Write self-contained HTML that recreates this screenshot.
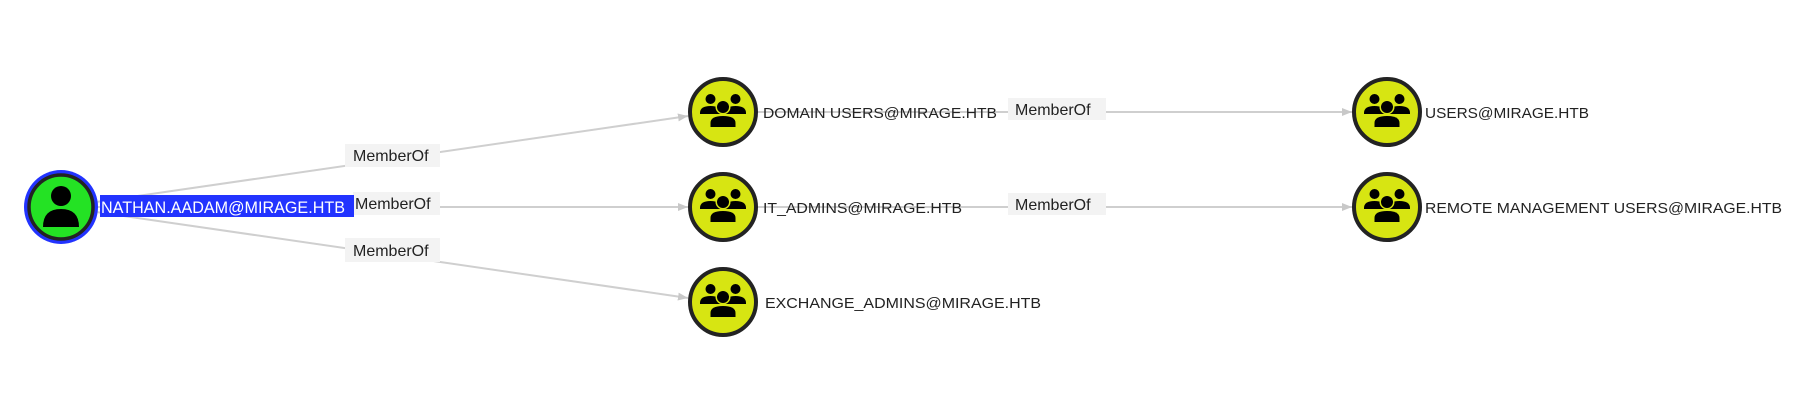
<!DOCTYPE html>
<html><head><meta charset="utf-8"><style>
html,body{margin:0;padding:0;background:#fff;width:1804px;height:412px;overflow:hidden}
svg{display:block}
text{font-family:"Liberation Sans",sans-serif}
</style></head><body>
<svg width="1804" height="412" viewBox="0 0 1804 412">
<defs>
<g id="grp">
  <circle r="33" fill="#d7e512" stroke="#232323" stroke-width="4"/>
  <circle cx="-12.5" cy="-13" r="5" fill="#000"/>
  <circle cx="12.5" cy="-13" r="5" fill="#000"/>
  <path d="M-23 2 v-1 q0-7 10.5-7 q10.5 0 10.5 7 v1 z" fill="#000"/>
  <path d="M2 2 v-1 q0-7 10.5-7 q10.5 0 10.5 7 v1 z" fill="#000"/>
  <circle cx="0" cy="-5" r="7.5" fill="#d7e512"/>
  <circle cx="0" cy="-5" r="6" fill="#000"/>
  <path d="M-14.5 17 v-6 q0-9 14.5-9 q14.5 0 14.5 9 v6 z" fill="#d7e512"/>
  <path d="M-12.5 15 v-4 q0-7 12.5-7 q12.5 0 12.5 7 v4 z" fill="#000"/>
</g>
<marker id="arr" markerWidth="10" markerHeight="8" refX="10" refY="4" orient="auto" markerUnits="userSpaceOnUse">
  <path d="M0 0 L10 4 L0 8 z" fill="#c8c8c8"/>
</marker>
</defs>
<g stroke="#cfcfcf" stroke-width="2" fill="none">
  <line x1="62" y1="207" x2="688" y2="116" marker-end="url(#arr)"/>
  <line x1="62" y1="207" x2="688" y2="207" marker-end="url(#arr)"/>
  <line x1="62" y1="207" x2="688" y2="298" marker-end="url(#arr)"/>
  <line x1="757" y1="112" x2="1352" y2="112" marker-end="url(#arr)"/>
  <line x1="757" y1="207" x2="1352" y2="207" marker-end="url(#arr)"/>
</g>
<g fill="#f3f3f3">
  <rect x="345" y="144" width="95" height="23"/>
  <rect x="353" y="192" width="87" height="23"/>
  <rect x="345" y="238" width="95" height="24"/>
  <rect x="1008" y="98" width="98" height="22"/>
  <rect x="1008" y="193" width="98" height="22"/>
</g>
<g fill="#222" font-size="16">
  <text x="353" y="161">MemberOf</text>
  <text x="355" y="209">MemberOf</text>
  <text x="353" y="256">MemberOf</text>
  <text x="1015" y="115">MemberOf</text>
  <text x="1015" y="210">MemberOf</text>
</g>
<circle cx="61" cy="207" r="37" fill="#2233ff"/>
<circle cx="61" cy="207" r="32" fill="#24e224" stroke="#232323" stroke-width="3.5"/>
<circle cx="61" cy="196" r="10" fill="#000"/>
<path d="M43 227 q0-18 18-18 q18 0 18 18 z" fill="#000"/>
<rect x="100" y="195" width="254" height="22" fill="#2233ff"/>
<text x="101" y="213" fill="#fff" font-size="17" textLength="244" lengthAdjust="spacingAndGlyphs">NATHAN.AADAM@MIRAGE.HTB</text>
<use href="#grp" x="723" y="112"/>
<use href="#grp" x="723" y="207"/>
<use href="#grp" x="723" y="302"/>
<use href="#grp" x="1387" y="112"/>
<use href="#grp" x="1387" y="207"/>
<g fill="#222" font-size="15">
  <text x="763" y="118" textLength="234" lengthAdjust="spacingAndGlyphs">DOMAIN USERS@MIRAGE.HTB</text>
  <text x="763" y="213" textLength="199" lengthAdjust="spacingAndGlyphs">IT_ADMINS@MIRAGE.HTB</text>
  <text x="765" y="308" textLength="276" lengthAdjust="spacingAndGlyphs">EXCHANGE_ADMINS@MIRAGE.HTB</text>
  <text x="1425" y="118" textLength="164" lengthAdjust="spacingAndGlyphs">USERS@MIRAGE.HTB</text>
  <text x="1425" y="213" textLength="357" lengthAdjust="spacingAndGlyphs">REMOTE MANAGEMENT USERS@MIRAGE.HTB</text>
</g>
</svg>
</body></html>
